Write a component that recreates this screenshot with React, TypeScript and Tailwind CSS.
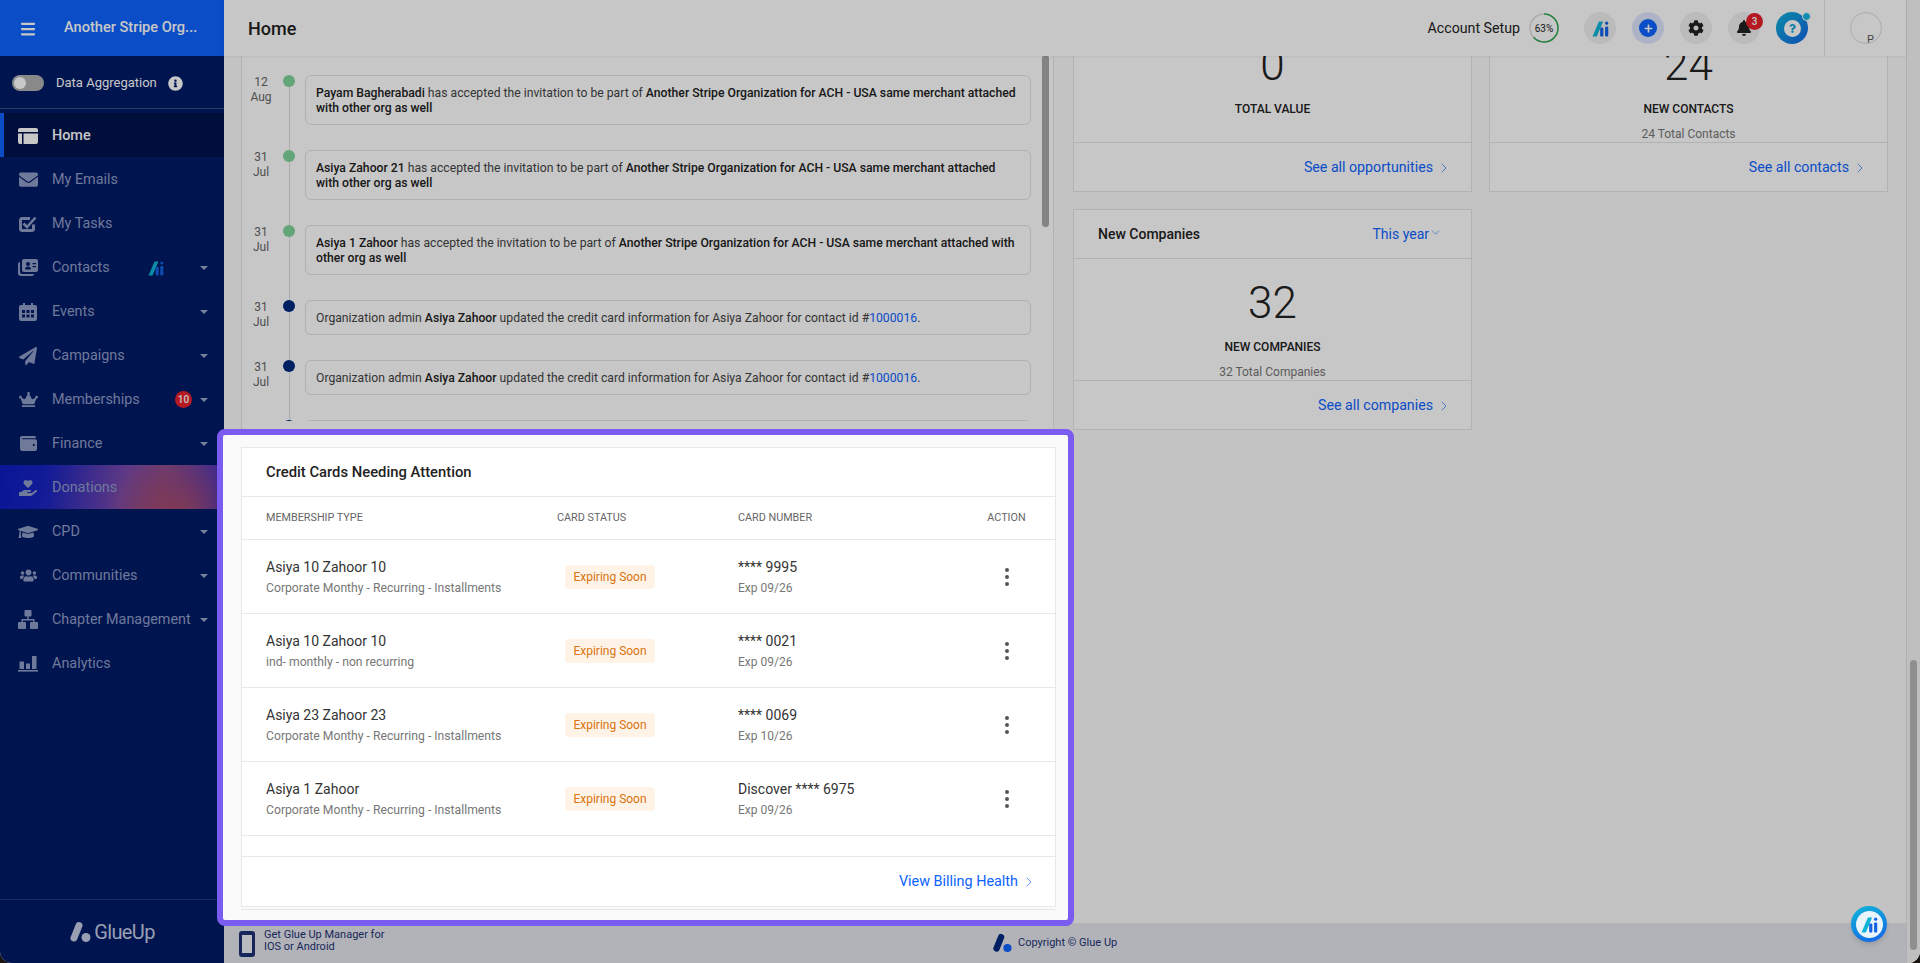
import React from 'react';
import {
  FaEnvelope, FaPaperPlane, FaCrown, FaWallet, FaHandHoldingHeart,
  FaGraduationCap, FaUsers, FaInfoCircle, FaCog, FaBell, FaPlus, FaQuestion,
} from 'react-icons/fa';
import { ChevronRight, ChevronDown, Menu } from 'lucide-react';

const HomeIcon = () => (
  <svg width="20" height="18" viewBox="0 0 20 18" fill="currentColor">
    <path d="M2 1h16a2 2 0 0 1 2 2v2H0V3a2 2 0 0 1 2-2zM0 6.500h4V17H2a2 2 0 0 1-2-2zM5.500 6.500H20V15a2 2 0 0 1-2 2H5.500z" />
  </svg>
);

const ContactsIcon = () => (
  <svg width="20" height="17" viewBox="0 0 20 17" fill="currentColor">
    <path d="M6 0h12a2 2 0 0 1 2 2v9a2 2 0 0 1-2 2H6a2 2 0 0 1-2-2V2a2 2 0 0 1 2-2zm4 3a2 2 0 1 0 0 4 2 2 0 0 0 0-4zM7 10.500h6c0-1.800-1.300-3-3-3s-3 1.200-3 3zM14.500 4h3.500v1.300h-3.500zM14.500 7h3.500v1.300h-3.500z" fillRule="evenodd" />
    <path d="M0 5a2 2 0 0 1 2-2v10a2 2 0 0 0 2 2h12a2 2 0 0 1-2 2H3a3 3 0 0 1-3-3z" />
  </svg>
);

const TasksIcon = () => (
  <svg width="18" height="18" viewBox="0 0 18 18" fill="none">
    <path d="M14.500 9.500V14a1.500 1.500 0 0 1-1.500 1.500H3A1.500 1.500 0 0 1 1.500 14V5A1.500 1.500 0 0 1 3 3.500h8" stroke="currentColor" strokeWidth="3" />
    <path d="M4.500 8.500l3.500 3.500 8.500-9.500" stroke="currentColor" strokeWidth="2.600" />
  </svg>
);

const CalendarIcon = () => (
  <svg width="18" height="18" viewBox="0 0 18 18" fill="currentColor">
    <path fillRule="evenodd" d="M4 0h2v2h6V0h2v2h2a2 2 0 0 1 2 2v12a2 2 0 0 1-2 2H2a2 2 0 0 1-2-2V4a2 2 0 0 1 2-2h2zM3 7v3h3V7zm4.500 0v3h3V7zM12 7v3h3V7zM3 11.500v3h3v-3zm4.500 0v3h3v-3zm4.500 0v3h3v-3z" />
  </svg>
);

const ChapterIcon = () => (
  <svg width="20" height="19" viewBox="0 0 20 19" fill="currentColor">
    <rect x="6.500" y="0" width="7" height="6.500" rx="1" />
    <rect x="0" y="12" width="8" height="7" rx="1" />
    <rect x="12" y="12" width="8" height="7" rx="1" />
    <path d="M9.300 6h1.400v3H16.500v3.500h-1.400V10.400H4.900v2.100H3.500V9h5.800z" />
  </svg>
);

const AnalyticsIcon = () => (
  <svg width="20" height="17" viewBox="0 0 20 17" fill="currentColor">
    <rect x="1.500" y="6.500" width="4.500" height="7.500" />
    <rect x="8" y="8.500" width="4" height="5.500" />
    <rect x="14" y="1" width="4.500" height="13" />
    <rect x="0" y="15" width="20" height="1.600" />
  </svg>
);

const AiLogo = ({ size = 16 }: { size?: number }) => (
  <svg width={size} height={size} viewBox="0 0 16 16">
    <path d="M0.500 15.500L6.500 1.500H10.500L4.500 15.500z" fill="#0db4d6" />
    <rect x="7.700" y="7" width="3" height="8.500" rx="1" fill="#1463e6" />
    <rect x="12.300" y="1.500" width="3" height="3" rx="1.500" fill="#1463e6" />
    <rect x="12.300" y="6" width="3" height="9.500" rx="1" fill="#1463e6" />
  </svg>
);

const GlueMark = ({ className, dot }: { className: string; dot: string }) => (
  <svg width="22" height="22" viewBox="0 0 22 22" className={className}>
    <line x1="10" y1="4.500" x2="5" y2="17" stroke="currentColor" strokeWidth="7" strokeLinecap="round" />
    <circle cx="17" cy="16.500" r="4.500" fill={dot} />
  </svg>
);

const Caret = () => <span className="w-0 h-0 border-x-[4px] border-x-transparent border-t-[4px] border-t-[#9aa7cc]" />;

const navItems = [
  { label: 'Home', icon: <HomeIcon />, active: true },
  { label: 'My Emails', icon: <FaEnvelope size={19} /> },
  { label: 'My Tasks', icon: <TasksIcon /> },
  { label: 'Contacts', icon: <ContactsIcon />, caret: true, ai: true },
  { label: 'Events', icon: <CalendarIcon />, caret: true },
  { label: 'Campaigns', icon: <FaPaperPlane size={18} />, caret: true },
  { label: 'Memberships', icon: <FaCrown size={19} />, caret: true, badge: '10' },
  { label: 'Finance', icon: <FaWallet size={17} />, caret: true },
  { label: 'Donations', icon: <FaHandHoldingHeart size={18} />, promo: true },
  { label: 'CPD', icon: <FaGraduationCap size={20} />, caret: true },
  { label: 'Communities', icon: <FaUsers size={17} />, caret: true },
  { label: 'Chapter Management', icon: <ChapterIcon />, caret: true },
  { label: 'Analytics', icon: <AnalyticsIcon /> },
];

const Sidebar = () => (
  <aside className="w-[224px] shrink-0 flex flex-col bg-[#001a66] text-[#8f9cc6]">
    <div className="h-[56px] shrink-0 flex items-center bg-[#0d63ff] text-white">
      <Menu size={18} strokeWidth={3} className="ml-[19px] mt-[2px]" />
      <span className="ml-[27px] text-[14.600px] font-medium">Another Stripe Org...</span>
    </div>
    <div className="h-[53px] shrink-0 flex items-center pt-[2px] pl-[12px] border-b border-[#3b4f8a] text-white">
      <span className="w-[32px] h-[16px] rounded-full bg-[#b0b0b0] flex items-center pl-[2px]">
        <span className="w-[12px] h-[12px] rounded-full bg-white" />
      </span>
      <span className="ml-[12px] text-[13px]">Data Aggregation</span>
      <FaInfoCircle size={15} className="ml-[11px]" />
    </div>
    <nav className="mt-[4px] flex flex-col">
      {navItems.map(item => (
        <div
          key={item.label}
          className={`h-[44px] flex items-center pt-[1px] text-[14.400px] ${
            item.active
              ? 'bg-[#00134d] border-l-4 border-[#0d63ff] text-white font-medium pl-[14px]'
              : item.promo
                ? 'pl-[18px] bg-[radial-gradient(ellipse_70px_60px_at_175px_50px,#a84a68_0%,#a84a6800_100%),linear-gradient(100deg,#0a1cc0_0%,#1a24c0_22%,#7a4aaa_55%,#8a4c90_72%,#5a3ab0_92%,#2a2ac0_100%)]'
                : 'pl-[18px]'
          }`}
        >
          <span className="w-[20px] flex justify-center shrink-0">{item.icon}</span>
          <span className="ml-[14px]">{item.label}</span>
          {item.ai && <span className="ml-[38px]"><AiLogo /></span>}
          <span className="ml-auto mr-[16px] flex items-center gap-[8px]">
            {item.badge && (
              <span className="w-[17px] h-[17px] rounded-full bg-[#e8202c] text-white text-[10px] font-medium flex items-center justify-center">
                {item.badge}
              </span>
            )}
            {item.caret && <Caret />}
          </span>
        </div>
      ))}
    </nav>
    <div className="mt-auto h-[64px] border-t border-[#1f3578] flex items-center justify-center text-[#c4cce4]">
      <GlueMark className="text-[#c4cce4]" dot="#c4cce4" />
      <span className="ml-[3px] text-[20px] tracking-[-0.6px]">GlueUp</span>
    </div>
  </aside>
);

const RoundIcon = ({ children, className = 'bg-[#f0f0f0]' }: { children: React.ReactNode; className?: string }) => (
  <span className={`relative w-[32px] h-[32px] rounded-full flex items-center justify-center ${className}`}>{children}</span>
);

const Header = () => (
  <header className="relative z-10 h-[56px] shrink-0 flex items-center bg-white shadow-[0_1px_2px_rgba(0,0,0,0.06)]">
    <h1 className="ml-[24px] text-[18px] font-medium text-[#222]">Home</h1>
    <div className="ml-auto flex items-center h-full">
      <span className="pt-[1px] text-[14.200px] text-[#222]">Account Setup</span>
      <span className="ml-[9px] relative w-[30px] h-[30px] flex items-center justify-center">
        <svg width="30" height="30" viewBox="0 0 30 30" className="absolute inset-0 -rotate-90">
          <circle cx="15" cy="15" r="14" fill="none" stroke="#dedede" strokeWidth="1.500" />
          <circle cx="15" cy="15" r="14" fill="none" stroke="#34a853" strokeWidth="1.500" strokeDasharray="55.400 88" />
        </svg>
        <span className="text-[10px] text-[#222]">63%</span>
      </span>
      <div className="ml-[25px] flex items-center gap-[16px]">
        <RoundIcon><AiLogo size={17} /></RoundIcon>
        <RoundIcon className="bg-[#dbe6fb]">
          <span className="w-[18px] h-[18px] rounded-full bg-[#0d63ff] flex items-center justify-center text-white"><FaPlus size={9} /></span>
        </RoundIcon>
        <RoundIcon><FaCog size={16} className="text-[#222]" /></RoundIcon>
        <RoundIcon>
          <FaBell size={16} className="text-[#222]" />
          <span className="absolute top-[1px] right-[-3px] w-[17px] h-[17px] rounded-full bg-[#e8202c] text-white text-[10px] font-medium flex items-center justify-center">3</span>
        </RoundIcon>
        <RoundIcon className="bg-[linear-gradient(135deg,#0fb5d8,#1463e6)]">
          <span className="w-[17px] h-[17px] rounded-full bg-white flex items-center justify-center text-[#0fa0d8]"><FaQuestion size={9} /></span>
          <span className="absolute top-[0px] right-[-3px] w-[9px] h-[9px] rounded-full bg-[#12b5e0] border border-white" />
        </RoundIcon>
      </div>
      <div className="ml-[16px] h-full w-[82px] border-l border-[#e6e6e6] flex items-center justify-center">
        <span className="w-[32px] h-[32px] rounded-full border border-[#dcdcdc] flex items-end justify-center overflow-hidden text-[11px] text-[#555] leading-[11px]">
          <span className="translate-x-[5px] translate-y-[2px]">P</span>
        </span>
      </div>
    </div>
  </header>
);

const ORG = 'Another Stripe Organization for ACH - USA same merchant attached with other org as well';
const ADMIN = (
  <>
    Organization admin <b className="font-medium text-[#222]">Asiya Zahoor</b> updated the credit card information for Asiya Zahoor for contact id #
    <span className="text-[#0d63ff]">1000016</span>.
  </>
);
const invite = (name: string) => (
  <>
    <b className="font-medium text-[#222]">{name}</b> has accepted the invitation to be part of <b className="font-medium text-[#222]">{ORG}</b>
  </>
);

const activity = [
  { day: '12', month: 'Aug', dot: 'bg-[#7fd39a]', body: invite('Payam Bagherabadi') },
  { day: '31', month: 'Jul', dot: 'bg-[#7fd39a]', body: invite('Asiya Zahoor 21') },
  { day: '31', month: 'Jul', dot: 'bg-[#7fd39a]', body: invite('Asiya 1 Zahoor') },
  { day: '31', month: 'Jul', dot: 'bg-[#002a80]', body: ADMIN },
  { day: '31', month: 'Jul', dot: 'bg-[#002a80]', body: ADMIN },
  { day: '31', month: 'Jul', dot: 'bg-[#002a80]', body: ADMIN },
];

const Timeline = () => (
  <section className="h-[458px] border-x border-[#e5e5e5] bg-white overflow-hidden flex pt-[104px]">
    <div className="flex-1 min-w-0 h-[346px] overflow-hidden">
      {activity.map((a, i) => (
        <div key={i} className="flex">
          <div className="w-[38px] shrink-0 text-center text-[12px] leading-[15px] text-[#666]">
            <div>{a.day}</div>
            <div>{a.month}</div>
          </div>
          <div className="w-[18px] shrink-0 flex flex-col items-center">
            <span className={`w-[12px] h-[12px] rounded-full shrink-0 ${a.dot}`} />
            <span className="w-px flex-1 bg-[#dcdcdc]" />
          </div>
          <div className="ml-[7px] flex-1 pb-[25px]">
            <div className="border border-[#dfe2e6] rounded-[6px] px-[10px] pt-[10px] pb-[8px] text-[12.200px] leading-[15px] text-[#444]">{a.body}</div>
          </div>
        </div>
      ))}
    </div>
    <div className="ml-[11px] mr-[4px] w-[7px] shrink-0">
      <div className="-mt-[20px] h-[172px] rounded-full bg-[#a8a8a8]" />
    </div>
  </section>
);

const cards = [
  { name: 'Asiya 10 Zahoor 10', plan: 'Corporate Monthy - Recurring - Installments', number: '**** 9995', exp: 'Exp 09/26' },
  { name: 'Asiya 10 Zahoor 10', plan: 'ind- monthly - non recurring', number: '**** 0021', exp: 'Exp 09/26' },
  { name: 'Asiya 23 Zahoor 23', plan: 'Corporate Monthy - Recurring - Installments', number: '**** 0069', exp: 'Exp 10/26' },
  { name: 'Asiya 1 Zahoor', plan: 'Corporate Monthy - Recurring - Installments', number: 'Discover **** 6975', exp: 'Exp 09/26' },
];

const rowGrid = 'grid grid-cols-[291px_181px_249px_1fr] pl-[24px]';

const CreditCards = () => (
  <div className="relative z-30 -ml-[24px] -mr-[20px] h-[497px] border-[6px] border-[#7a5cf0] rounded-[8px] bg-[#fafafa] pl-[18px] pr-[12px] pt-[12px]">
    <section className="bg-white border border-[#e8e8e8]">
      <h2 className="h-[49px] flex items-center pl-[24px] text-[14.800px] font-medium text-[#222] border-b border-[#e8e8e8]">
        Credit Cards Needing Attention
      </h2>
      <div className={`${rowGrid} h-[43px] items-center text-[10.800px] text-[#666] uppercase border-b border-[#e8e8e8]`}>
        <span>Membership Type</span>
        <span>Card Status</span>
        <span>Card Number</span>
        <span className="w-[39px] text-center">Action</span>
      </div>
      {cards.map((c, i) => (
        <div key={i} className={`${rowGrid} h-[74px] items-center border-b border-[#e8e8e8]`}>
          <div className="pt-[2px]">
            <div className="text-[14px] leading-[20px] text-[#333]">{c.name}</div>
            <div className="mt-[1px] text-[12.200px] leading-[20px] text-[#777]">{c.plan}</div>
          </div>
          <div>
            <span className="ml-[8px] inline-flex items-center justify-center w-[90px] h-[24px] rounded-[4px] bg-[#fff3e8] text-[12px] text-[#d9730d]">Expiring Soon</span>
          </div>
          <div className="pt-[2px]">
            <div className="text-[14px] leading-[20px] text-[#333]">{c.number}</div>
            <div className="mt-[1px] text-[12px] leading-[20px] text-[#777]">{c.exp}</div>
          </div>
          <div className="w-[39px] flex flex-col items-center gap-[3px]">
            <span className="w-[4px] h-[4px] rounded-full bg-[#555]" />
            <span className="w-[4px] h-[4px] rounded-full bg-[#555]" />
            <span className="w-[4px] h-[4px] rounded-full bg-[#555]" />
          </div>
        </div>
      ))}
      <div className="h-[21px] border-b border-[#e8e8e8]" />
      <div className="h-[49px] flex items-center justify-end pr-[18px] text-[14.400px] text-[#0d63ff]">
        View Billing Health
        <ChevronRight size={16} strokeWidth={1} className="ml-[3px]" />
      </div>
    </section>
    <div className="mt-[2px] border-t border-[#e8e8e8]" />
  </div>
);

const SeeAll = ({ label }: { label: string }) => (
  <div className="h-[49px] border-t border-[#e5e5e5] flex items-center justify-end pt-[1px] pr-[19px] text-[14.200px] text-[#0d63ff]">
    {label}
    <ChevronRight size={16} strokeWidth={1} className="ml-[3px]" />
  </div>
);

const StatCard = ({ title, value, label, total, link }: { title: string; value: string; label: string; total?: string; link: string }) => (
  <section className="h-[221px] border border-[#e5e5e5] bg-white flex flex-col">
    <div className="h-[49px] shrink-0 border-b border-[#e5e5e5] flex items-center pl-[24px] pr-[29px] text-[14px] font-medium text-[#222]">
      {title}
      <span className="ml-auto flex items-center font-normal text-[#0d63ff]">
        This year
        <ChevronDown size={13} strokeWidth={1} className="-mt-[4px]" />
      </span>
    </div>
    <div className="flex-1 flex flex-col items-center overflow-hidden">
      <div className="mt-[19px] h-[50px] text-[44px] leading-[50px] text-[#222] font-light">{value}</div>
      <div className="mt-[11px] text-[12px] leading-[16px] text-[#222] font-medium">{label}</div>
      {total && <div className="mt-[9px] text-[12px] leading-[16px] text-[#777]">{total}</div>}
    </div>
    <SeeAll label={link} />
  </section>
);

const AppFooter = () => (
  <footer className="relative z-10 h-[40px] shrink-0 bg-[#e3e6ee] flex items-center text-[11px] leading-[12px] text-[#1f3272]">
    <span className="ml-[15px] w-[16px] h-[26px] mt-[2px] rounded-[3px] border-x-[3px] border-y-[4px] border-[#1f3272] bg-white/40" />
    <span className="ml-[9px] w-[130px] -mt-[4px]">Get Glue Up Manager for<br />IOS or Android</span>
    <div className="ml-[598px] flex items-center">
      <GlueMark className="text-[#002a80] w-[20px] h-[20px]" dot="#0d63ff" />
      <span className="ml-[6px]">Copyright © Glue Up</span>
    </div>
  </footer>
);

export default function App() {
  return (
    <div className="w-[1920px] h-[963px] bg-[#1a1410] overflow-hidden [font-family:Roboto,sans-serif]">
      <div className="relative w-full h-full flex rounded-b-[12px] overflow-hidden bg-[#fafafa]">
        <Sidebar />
        <main className="flex-1 min-w-0 flex flex-col">
          <Header />
          <div className="flex-1 min-h-0 pl-[17px] -mt-[85px]">
            <div className="grid grid-cols-[813px_814px] gap-x-[19px] items-start">
              <div className="flex flex-col">
                <Timeline />
                <CreditCards />
              </div>
              <div className="grid grid-cols-[399px_399px] gap-x-[17px] gap-y-[17px] items-start">
                <StatCard title="New Opportunities" value="0" label="TOTAL VALUE" link="See all opportunities" />
                <StatCard title="New Contacts" value="24" label="NEW CONTACTS" total="24 Total Contacts" link="See all contacts" />
                <StatCard title="New Companies" value="32" label="NEW COMPANIES" total="32 Total Companies" link="See all companies" />
              </div>
            </div>
          </div>
          <AppFooter />
        </main>
        <div className="w-[14px] shrink-0 border-l border-[#e0e0e0] bg-[#f5f5f5] px-[3px] pt-[660px]">
          <div className="h-[290px] rounded-full bg-[#b8b8b8]" />
        </div>
        <div className="absolute inset-0 z-20 bg-black/[0.22]" />
        <button className="absolute z-40 left-[1851px] top-[906px] w-[36px] h-[36px] rounded-full bg-[linear-gradient(160deg,#0fb5d8,#1463e6)] flex items-center justify-center shadow-md">
          <span className="w-[27px] h-[27px] rounded-full bg-[#e9f4fb] flex items-center justify-center"><AiLogo size={17} /></span>
        </button>
      </div>
    </div>
  );
}
